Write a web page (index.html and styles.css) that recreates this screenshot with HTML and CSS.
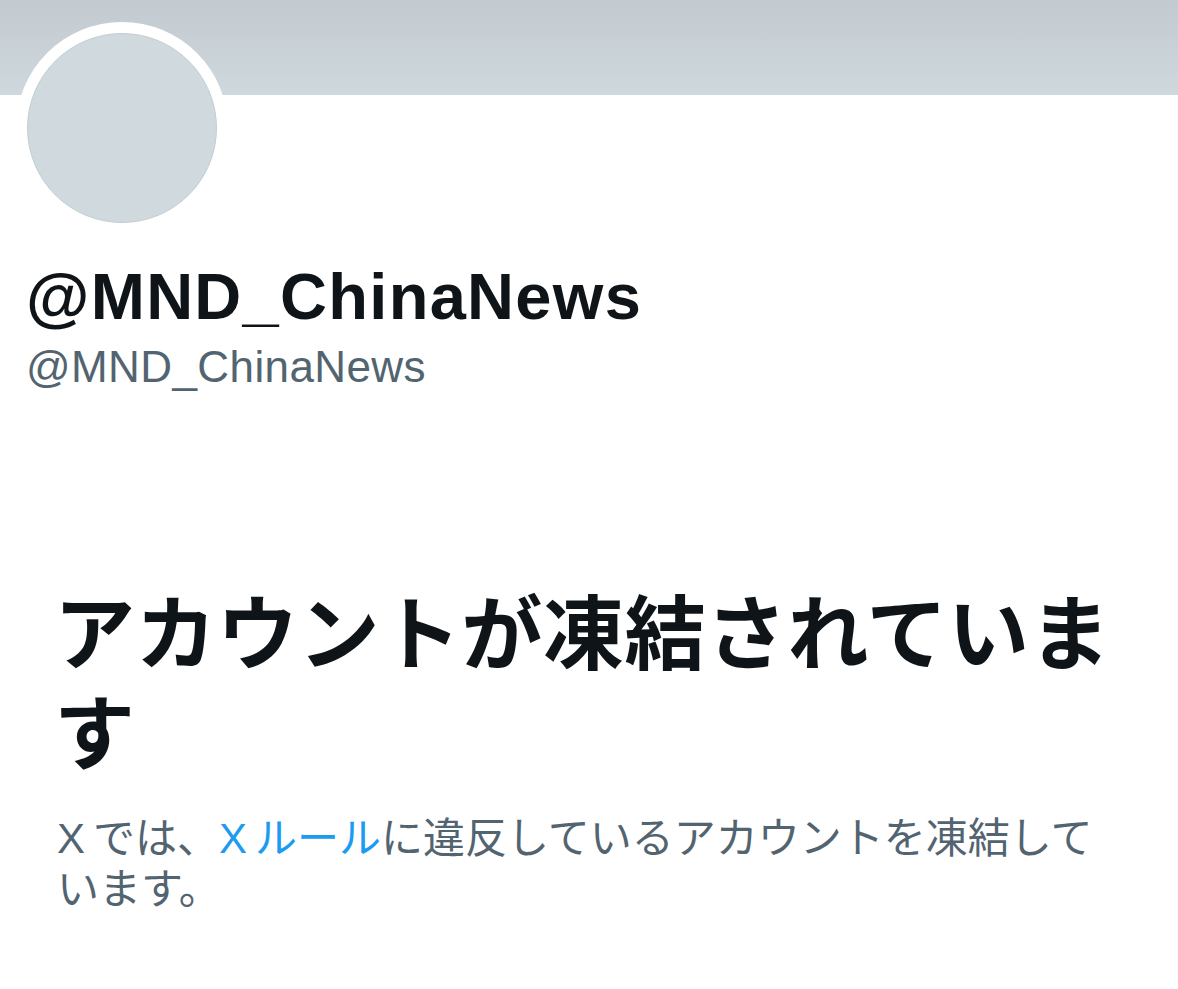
FILE: index.html
```html
<!DOCTYPE html>
<html lang="ja">
<head>
    <meta charset="UTF-8">
    <meta name="viewport" content="width=device-width, initial-scale=1.0">
    <title>@MND_ChinaNews</title>
    <link rel="stylesheet" href="styles.css">
</head>
<body>
    <div class="banner"></div>
    <div class="profile">
        <div class="avatar">
            <div class="avatar-inner"></div>
        </div>
        <h1 class="name">@MND_ChinaNews</h1>
        <div class="handle">@MND_ChinaNews</div>
    </div>
    <div class="suspended">
        <h2>アカウントが凍結されています</h2>
        <p><span class="latin">X</span>では、<a href="#"><span class="latin">X</span>ルール</a>に違反しているアカウントを凍結しています。</p>
    </div>
</body>
</html>
```

FILE: styles.css
```css
body {
    margin: 0;
    background-color: white;
    font-family: "Liberation Sans", "Noto Sans CJK JP", sans-serif;
    color: #0f1419;
}
.banner {
    height: 95px;
    background: linear-gradient(to bottom, #c2cad0, #cfd8dd);
}
.profile {
    padding: 0 26px;
}
.avatar {
    width: 212px;
    height: 212px;
    margin-top: -73px;
    margin-left: -10px;
    border-radius: 50%;
    background-color: white;
    display: flex;
    justify-content: center;
    align-items: center;
}
.avatar-inner {
    width: 188px;
    height: 188px;
    border-radius: 50%;
    background-color: #cfd9de;
    border: 1px solid #c4cdd2;
}
.name {
    margin: 24px 0 0 0;
    font-size: 65px;
    line-height: 78px;
    font-weight: bold;
    letter-spacing: 1.3px;
}
.handle {
    margin-top: 5px;
    font-size: 44px;
    line-height: 52px;
    letter-spacing: 0.4px;
    color: #536471;
}
.suspended {
    padding: 185px 57px 0 54px;
}
.suspended h2 {
    margin: 0;
    font-family: "Noto Sans CJK JP", sans-serif;
    font-size: 81px;
    line-height: 100px;
    font-weight: bold;
    letter-spacing: 0.5px;
}
.suspended p {
    margin: 35px 0 0 3px;
    font-family: "Liberation Sans", "Noto Sans CJK JP", sans-serif;
    font-size: 42px;
    line-height: 51px;
    color: #536471;
}
.suspended .latin {
    margin-right: 8px;
}
.suspended a {
    color: #1d9bf0;
    text-decoration: none;
}
```
